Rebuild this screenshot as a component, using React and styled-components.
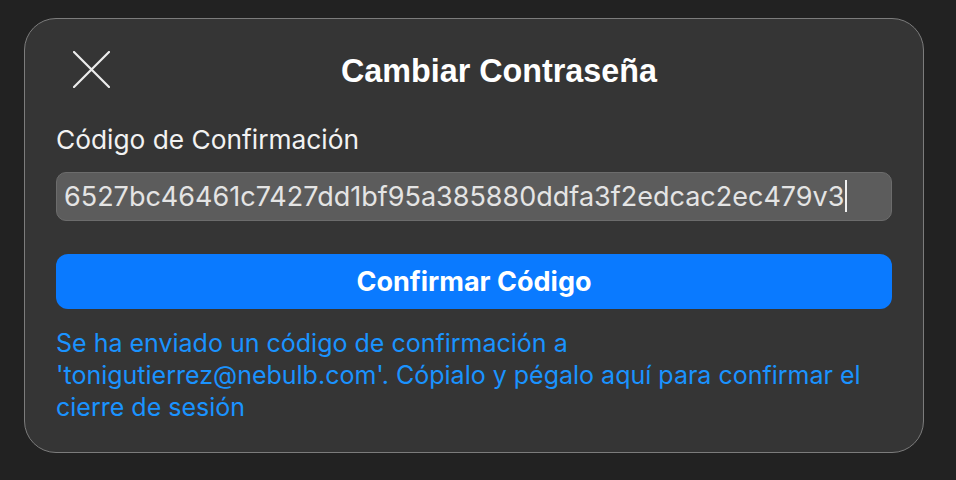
import React from "react";
import styled, { createGlobalStyle } from "styled-components";

const Global = createGlobalStyle`
  html, body { margin: 0; padding: 0; background: #222222; }
  body { font-family: Inter, "Noto Sans", sans-serif; -webkit-font-smoothing: antialiased; }
`;

const Page = styled.div`
  width: 956px;
  height: 480px;
  box-sizing: border-box;
  padding: 18px 32px 27px 24px;
  display: flex;
`;

const Dialog = styled.div`
  flex: 1;
  box-sizing: border-box;
  background: #353535;
  border: 1.5px solid #7c7c7c;
  border-radius: 32px;
  padding: 32px 31px 0 31px;
  display: flex;
  flex-direction: column;
`;

const Header = styled.div`
  position: relative;
  height: 40px;
  display: flex;
  align-items: center;
  justify-content: center;
`;

const CloseButton = styled.button`
  position: absolute;
  left: 17px;
  top: 0;
  width: 37px;
  height: 37px;
  padding: 0;
  border: none;
  background: transparent;
  display: flex;
  align-items: center;
  justify-content: center;
  cursor: pointer;
`;

const Title = styled.h1`
  margin: 1px 0 0 50px;
  font-family: "Liberation Sans", Arial, sans-serif;
  font-weight: 700;
  font-size: 32.3px;
  color: #ffffff;
`;

const Label = styled.label`
  margin-top: 33.5px;
  font-size: 26.3px;
  color: #f2f2f2;
  line-height: 30px;
`;

const InputBox = styled.div`
  margin-top: 17px;
  height: 49px;
  box-sizing: border-box;
  background: #5c5c5c;
  border: 1px solid #6c6c6c;
  border-radius: 10px;
  display: flex;
  align-items: center;
  padding: 0 7px;
  font-size: 27px;
  color: #e4e4e4;
  white-space: nowrap;
  overflow: hidden;
`;

const Caret = styled.span`
  display: inline-block;
  flex: none;
  width: 2px;
  height: 32px;
  background: #f0f0f0;
  margin-left: 1px;
`;

const PrimaryButton = styled.button`
  margin-top: 33px;
  height: 55px;
  border: none;
  border-radius: 12px;
  background: #0a7aff;
  color: #ffffff;
  font-family: Inter, "Noto Sans", sans-serif;
  font-weight: 700;
  font-size: 27px;
  cursor: pointer;
`;

const Note = styled.p`
  margin: 18px 0 0 0;
  font-size: 25px;
  line-height: 32px;
  color: #1a93ff;
`;

function CloseIcon() {
  return (
    <svg width="37" height="37" viewBox="0 0 37 37">
      <path d="M1 1 L36 36 M36 1 L1 36" stroke="#ececec" strokeWidth="2.2" strokeLinecap="round" fill="none" />
    </svg>
  );
}

export default function App() {
  return (
    <>
      <Global />
      <Page>
        <Dialog>
          <Header>
            <CloseButton aria-label="Cerrar">
              <CloseIcon />
            </CloseButton>
            <Title>Cambiar Contraseña</Title>
          </Header>
          <Label>Código de Confirmación</Label>
          <InputBox>
            <span>6527bc46461c7427dd1bf95a385880ddfa3f2edcac2ec479v3</span>
            <Caret />
          </InputBox>
          <PrimaryButton>Confirmar Código</PrimaryButton>
          <Note>
            Se ha enviado un código de confirmación a 'tonigutierrez@nebulb.com'. Cópialo y pégalo aquí para confirmar el cierre de sesión
          </Note>
        </Dialog>
      </Page>
    </>
  );
}
